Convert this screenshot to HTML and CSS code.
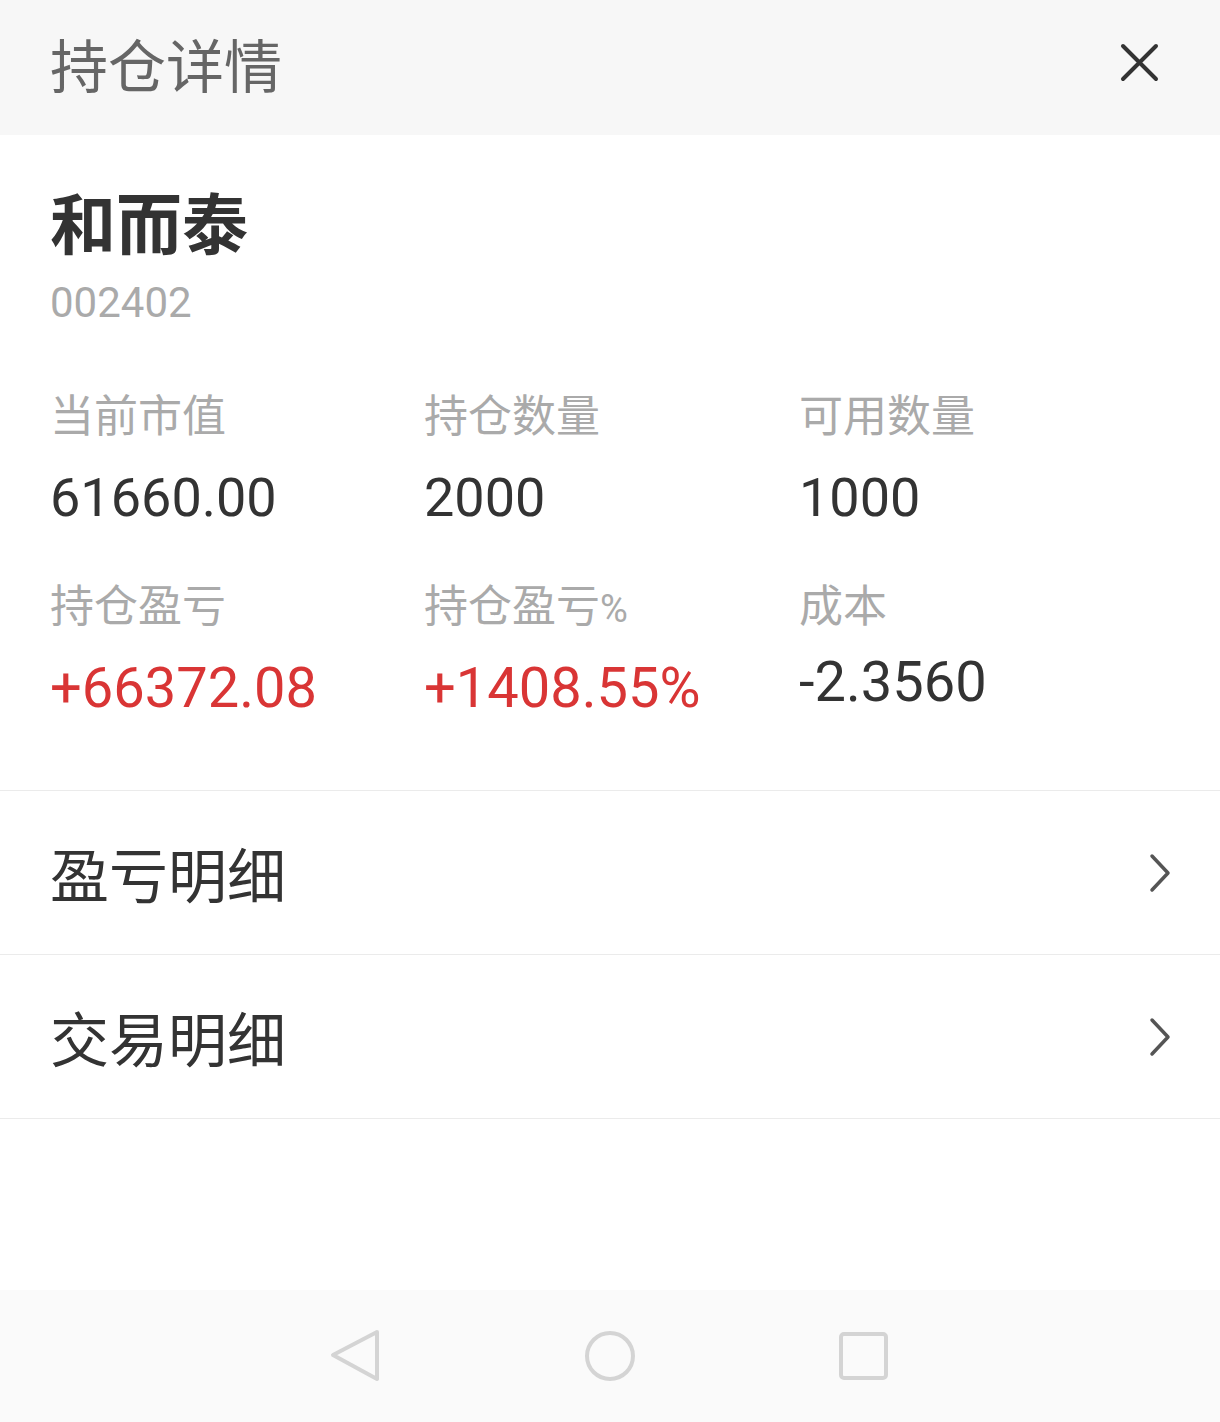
FILE: index.html
```html
<!DOCTYPE html>
<html lang="zh-CN">

<head>
  <meta charset="UTF-8">
  <title>持仓详情</title>
  <meta name="viewport" content="width=device-width, initial-scale=1.0" />
  <link rel="stylesheet" href="styles.css">
</head>

<body>
  <div class="page">
    <div class="header">
      <h1>持仓详情</h1>
      <svg class="close" width="40" height="40" viewBox="0 0 40 40">
        <path d="M3 3 L36 36 M36 3 L3 36" stroke="#333" stroke-width="4" stroke-linecap="round" fill="none" />
      </svg>
    </div>

    <div class="info">
      <div class="name">和而泰</div>
      <div class="code">002402</div>

      <div class="stats">
        <div class="stat">
          <div class="label">当前市值</div>
          <div class="value">61660.00</div>
        </div>
        <div class="stat">
          <div class="label">持仓数量</div>
          <div class="value">2000</div>
        </div>
        <div class="stat">
          <div class="label">可用数量</div>
          <div class="value">1000</div>
        </div>
        <div class="stat">
          <div class="label">持仓盈亏</div>
          <div class="value big red">+66372.08</div>
        </div>
        <div class="stat">
          <div class="label">持仓盈亏<span class="pct">%</span></div>
          <div class="value big red">+1408.55%</div>
        </div>
        <div class="stat">
          <div class="label">成本</div>
          <div class="value big cost">-2.3560</div>
        </div>
      </div>
    </div>

    <div class="list">
      <div class="row">
        <span>盈亏明细</span>
        <svg width="24" height="40" viewBox="0 0 24 40">
          <path d="M4 3 L20 20 L4 37" stroke="#555" stroke-width="3.5" stroke-linecap="round" stroke-linejoin="round" fill="none" />
        </svg>
      </div>
      <div class="row">
        <span>交易明细</span>
        <svg width="24" height="40" viewBox="0 0 24 40">
          <path d="M4 3 L20 20 L4 37" stroke="#555" stroke-width="3.5" stroke-linecap="round" stroke-linejoin="round" fill="none" />
        </svg>
      </div>
    </div>

    <div class="navbar">
      <svg width="52" height="56" viewBox="0 0 52 56">
        <path d="M47 4 L3 27 L47 51 Z" stroke="#d4d4d4" stroke-width="4" stroke-linejoin="round" fill="none" />
      </svg>
      <svg width="52" height="56" viewBox="0 0 52 56">
        <circle cx="26" cy="28" r="23" stroke="#d4d4d4" stroke-width="4" fill="none" />
      </svg>
      <svg width="52" height="56" viewBox="0 0 52 56">
        <rect x="3" y="6" width="45" height="44" rx="3" stroke="#d4d4d4" stroke-width="4" fill="none" />
      </svg>
    </div>
  </div>
</body>

</html>
```

FILE: styles.css
```css
* {
  box-sizing: border-box;
}

body {
  margin: 0;
  background: #fff;
  font-family: "Noto Sans CJK SC", "Noto Sans", sans-serif;
}

.page {
  display: flex;
  flex-direction: column;
  min-height: 100vh;
}

.header {
  height: 135px;
  background: #f7f7f7;
  display: flex;
  align-items: center;
  justify-content: space-between;
  padding: 0 60px 0 50px;
}

.header h1 {
  margin: 0;
  font-size: 58px;
  font-weight: 400;
  color: #666;
  line-height: 1;
  padding-bottom: 10px;
}

.close {
  margin-top: -9px;
}

.info {
  padding: 45px 0 70px 50px;
}

.name {
  font-size: 66px;
  font-weight: 700;
  color: #333;
  line-height: 80px;
}

.code {
  font-family: Roboto, "Liberation Sans", sans-serif;
  font-size: 42px;
  color: #aaa;
  line-height: 50px;
  margin-top: 18px;
}

.stats {
  display: grid;
  grid-template-columns: 374px 375px 1fr;
  row-gap: 45px;
  margin-top: 57px;
}

.label {
  font-size: 44px;
  color: #aaa;
  line-height: 56px;
  height: 56px;
}

.label .pct {
  font-family: Roboto, "Liberation Sans", sans-serif;
  font-size: 38px;
  line-height: 1;
}

.value {
  font-family: Roboto, "Liberation Sans", sans-serif;
  font-size: 54px;
  color: #333;
  line-height: 64px;
  margin-top: 25px;
}

.value.big {
  font-size: 56px;
}

.value.red {
  color: #d93535;
}

.value.cost {
  margin-top: 19px;
}

.list {
  border-top: 1px solid #ebebeb;
}

.row {
  height: 164px;
  display: flex;
  align-items: center;
  justify-content: space-between;
  padding: 0 48px 0 50px;
  border-bottom: 1px solid #ebebeb;
}

.row span {
  font-size: 59px;
  color: #333;
}

.navbar {
  margin-top: auto;
  height: 132px;
  background: #fafafa;
  display: flex;
  align-items: center;
  justify-content: center;
  gap: 202px;
}
```
